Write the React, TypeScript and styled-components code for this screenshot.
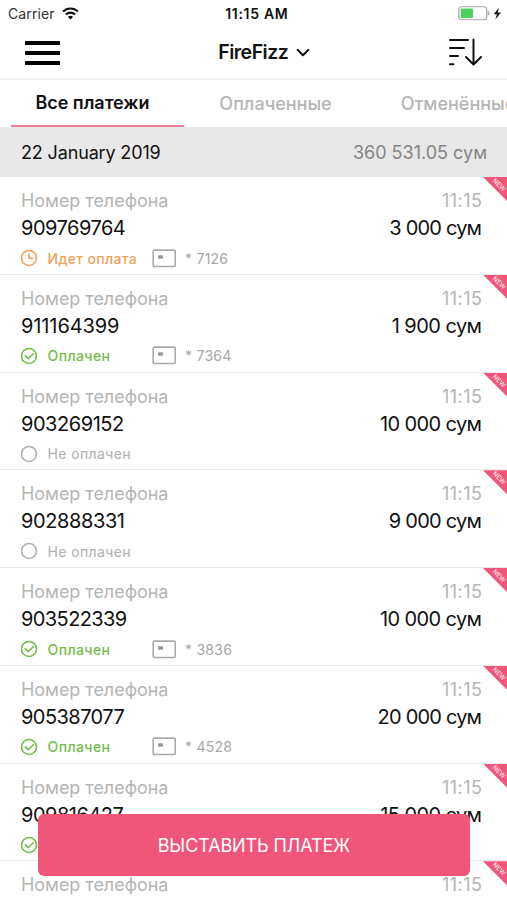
import React from 'react';
import styled, { createGlobalStyle } from 'styled-components';

const GlobalStyle = createGlobalStyle`
  * { box-sizing: border-box; }
  body { margin: 0; background: #fff; overflow: hidden; }
  button { font: inherit; border: 0; background: none; padding: 0; }
`;

const Screen = styled.div`
  position: relative;
  display: flex;
  flex-direction: column;
  height: 900px;
  overflow: hidden;
  background: #fff;
  color: #111;
  font-family: Inter, Roboto, sans-serif;
  white-space: nowrap;
`;

const Text = styled.span<{ $tracking?: number }>`
  letter-spacing: ${(p) => p.$tracking ?? 0}px;
  margin-right: ${(p) => -(p.$tracking ?? 0)}px;
`;

const StatusBar = styled.div`
  display: grid;
  grid-template-columns: 1fr auto 1fr;
  align-items: center;
  flex: none;
  height: 27px;
  padding: 0 5px 0 8px;
  font-size: 14px;
`;

const Carrier = styled.div`
  display: flex;
  align-items: center;
  gap: 7px;
  color: #333;
`;

const Clock = styled(Text)`
  font-weight: 600;
  margin-left: 3px;
`;

const Power = styled.div`
  display: flex;
  justify-content: flex-end;
`;

const NavBar = styled.header`
  display: grid;
  grid-template-columns: 1fr auto 1fr;
  align-items: center;
  flex: none;
  height: 53px;
  padding: 0 25px;
  border-bottom: 2px solid #efefef;
`;

const IconButton = styled.button<{ $end?: boolean }>`
  display: flex;
  justify-self: ${(p) => (p.$end ? 'end' : 'start')};
`;

const Account = styled.button`
  display: flex;
  align-items: center;
  gap: 7px;
  margin-left: 21px;
  padding-bottom: 1px;
  color: #111;
  font-size: 19.5px;
  font-weight: 600;
`;

const Tabs = styled.nav`
  display: flex;
  flex: none;
  height: 47px;
  padding-left: 11px;
  gap: 5px;
`;

const Tab = styled.button<{ $active?: boolean }>`
  flex: none;
  width: 173px;
  height: 47px;
  font-size: 18px;
  line-height: ${(p) => (p.$active ? 45 : 47)}px;
  letter-spacing: ${(p) => (p.$active ? -0.05 : 0)}px;
  font-weight: ${(p) => (p.$active ? 600 : 500)};
  color: ${(p) => (p.$active ? '#111' : '#b5b5b5')};
  border-bottom: ${(p) => (p.$active ? '2px solid #ee7f9b' : '0')};
  padding-right: ${(p) => (p.$active ? 10 : 0)}px;

  &:last-child {
    width: 182px;
  }
`;

const DateBar = styled.div`
  display: flex;
  justify-content: space-between;
  align-items: center;
  flex: none;
  height: 50px;
  padding: 1px 20px 0 21px;
  background: #e8e8e8;
  font-size: 18px;
`;

const Total = styled(Text)`
  color: #858585;
`;

const List = styled.div`
  flex: none;
`;

const Row = styled.article`
  position: relative;
  height: 97.75px;
  padding: 11px 25px 0 21px;
  border-bottom: 1.5px solid #ebebeb;
`;

const Line = styled.div<{ $muted?: boolean }>`
  display: flex;
  justify-content: space-between;
  align-items: center;
  height: ${(p) => (p.$muted ? 25 : 30)}px;
  font-size: ${(p) => (p.$muted ? 18 : 20)}px;
  color: ${(p) => (p.$muted ? '#b5b5b5' : '#111')};
`;

const StatusLine = styled.div`
  display: flex;
  align-items: center;
  height: 30px;
  font-size: 14px;
`;

const State = styled.div<{ $color: string; $bold: boolean }>`
  display: flex;
  align-items: center;
  gap: 9.5px;
  width: 131px;
  color: ${(p) => p.$color};
  font-weight: ${(p) => (p.$bold ? 450 : 400)};
`;

const Card = styled.div`
  display: flex;
  align-items: center;
  gap: 8px;
  color: #a8a8a8;
`;

const Ribbon = styled.div`
  position: absolute;
  top: 0;
  right: 0;
  width: 24px;
  height: 24px;
  background: #f0557a;
  clip-path: polygon(0 0, 100% 0, 100% 100%);
`;

const RibbonText = styled.span`
  position: absolute;
  top: 4px;
  left: 5px;
  width: 22px;
  height: 8px;
  color: #fff;
  font-size: 6.5px;
  line-height: 8px;
  text-align: center;
  transform: rotate(45deg);
`;

const PayButton = styled.button`
  position: absolute;
  left: 38px;
  right: 37px;
  top: 814px;
  height: 62px;
  border-radius: 6px;
  background: #f0557a;
  color: #fff;
  font-size: 18px;
  letter-spacing: -0.12px;
`;

type Status = 'pending' | 'paid' | 'unpaid';

interface Payment {
  phone: string;
  phoneTracking: number;
  amount: string;
  amountTracking: number;
  status: Status;
  card?: string;
}

const STATES: Record<Status, { label: string; color: string; tracking: number }> = {
  pending: { label: 'Идет оплата', color: '#eda35c', tracking: 0.35 },
  paid: { label: 'Оплачен', color: '#74bd4a', tracking: 0.4 },
  unpaid: { label: 'Не оплачен', color: '#b0b0b0', tracking: 0.38 },
};

const PAYMENTS: Payment[] = [
  { phone: '909769764', phoneTracking: -0.5, amount: '3 000 сум', amountTracking: -0.8, status: 'pending', card: '7126' },
  { phone: '911164399', phoneTracking: -0.1, amount: '1 900 сум', amountTracking: -0.55, status: 'paid', card: '7364' },
  { phone: '903269152', phoneTracking: -0.45, amount: '10 000 сум', amountTracking: -0.6, status: 'unpaid' },
  { phone: '902888331', phoneTracking: -0.4, amount: '9 000 сум', amountTracking: -0.75, status: 'unpaid' },
  { phone: '903522339', phoneTracking: -0.6, amount: '10 000 сум', amountTracking: -0.6, status: 'paid', card: '3836' },
  { phone: '905387077', phoneTracking: -0.55, amount: '20 000 сум', amountTracking: -0.8, status: 'paid', card: '4528' },
  { phone: '909816427', phoneTracking: -0.5, amount: '15 000 сум', amountTracking: -0.6, status: 'paid', card: '4528' },
  { phone: '909816427', phoneTracking: -0.5, amount: '15 000 сум', amountTracking: -0.6, status: 'paid', card: '4528' },
];

const WifiIcon = () => (
  <svg width="17" height="13" viewBox="0 0 17 13" fill="none" stroke="#111" strokeWidth="2.1">
    <path d="M1 4.6a10.7 10.7 0 0 1 15 0" />
    <path d="M3.8 7.6a6.7 6.7 0 0 1 9.4 0" />
    <path d="M8.5 12.6 5.9 10a3.7 3.7 0 0 1 5.2 0Z" fill="#111" stroke="none" />
  </svg>
);

const BatteryIcon = () => (
  <svg width="44" height="15" viewBox="0 0 44 15">
    <rect x="0.75" y="0.75" width="28" height="13" rx="3" fill="#fff" stroke="#a8a8a8" strokeWidth="1.2" />
    <rect x="2.7" y="2.6" width="12.3" height="9.3" rx="1" fill="#4cd15f" />
    <path d="M30.2 5.2q1.8 2 0 4Z" fill="#a8a8a8" stroke="#a8a8a8" />
    <path d="M41 1.6 35.7 8.3h3.2l-1.5 5.1 5.6-7h-3.4Z" fill="#111" />
  </svg>
);

const MenuIcon = () => (
  <svg width="35" height="24" viewBox="0 0 35 24" fill="#000">
    <rect y="0" width="35" height="4" rx="0.5" />
    <rect y="10" width="35" height="4" rx="0.5" />
    <rect y="20" width="35" height="4" rx="0.5" />
  </svg>
);

const SortIcon = () => (
  <svg width="34" height="29" viewBox="0 0 34 29" fill="none" stroke="#111" strokeWidth="2" strokeLinecap="round" strokeLinejoin="round">
    <path d="M2 2h18M2 10h14M2 18h8M2 26.3h3.5M25.5 1.5v25M18 19l7.5 7.5L33 19" />
  </svg>
);

const ChevronIcon = () => (
  <svg width="14" height="9" viewBox="0 0 14 9" fill="none" stroke="#111" strokeWidth="1.9" strokeLinecap="round" strokeLinejoin="round">
    <path d="M1.5 1.8 7 7.2l5.5-5.4" />
  </svg>
);

const StateIcon = ({ status }: { status: Status }) => (
  <svg width="17" height="18" viewBox="0 0 17 18" fill="none" stroke="currentColor" strokeWidth="1.6">
    <circle cx="8" cy="9" r="7.5" />
    {status === 'paid' && <path d="m3.8 8.4 3.5 3.3 5.4-5.4" />}
    {status === 'pending' && <path d="M8 4.5v4.8h4.2" />}
  </svg>
);

const CardIcon = () => (
  <svg width="25" height="19" viewBox="0 0 25 19">
    <rect x="1.2" y="1.1" width="22" height="16.4" rx="1.2" fill="none" stroke="#aaa" strokeWidth="1.6" />
    <rect x="6" y="6.3" width="5" height="3.4" rx="0.6" fill="#999" />
  </svg>
);

const PaymentRow = ({ payment }: { payment: Payment }) => {
  const state = STATES[payment.status];
  return (
    <Row>
      <Line $muted>
        <Text $tracking={-0.04}>Номер телефона</Text>
        <Text $tracking={0.5}>11:15</Text>
      </Line>
      <Line>
        <Text $tracking={payment.phoneTracking}>{payment.phone}</Text>
        <Text $tracking={payment.amountTracking}>{payment.amount}</Text>
      </Line>
      <StatusLine>
        <State $color={state.color} $bold={payment.status !== 'unpaid'}>
          <StateIcon status={payment.status} />
          <Text $tracking={state.tracking}>{state.label}</Text>
        </State>
        {payment.card && (
          <Card>
            <CardIcon />
            <Text $tracking={0.25}>* {payment.card}</Text>
          </Card>
        )}
      </StatusLine>
      <Ribbon>
        <RibbonText>NEW</RibbonText>
      </Ribbon>
    </Row>
  );
};

export default function App() {
  return (
    <Screen>
      <GlobalStyle />
      <StatusBar>
        <Carrier>
          <Text $tracking={0.1}>Carrier</Text>
          <WifiIcon />
        </Carrier>
        <Clock $tracking={0.7}>11:15 AM</Clock>
        <Power>
          <BatteryIcon />
        </Power>
      </StatusBar>
      <NavBar>
        <IconButton aria-label="Menu">
          <MenuIcon />
        </IconButton>
        <Account>
          <Text $tracking={-0.5}>FireFizz</Text>
          <ChevronIcon />
        </Account>
        <IconButton $end aria-label="Sort">
          <SortIcon />
        </IconButton>
      </NavBar>
      <Tabs>
        <Tab $active>Все платежи</Tab>
        <Tab>Оплаченные</Tab>
        <Tab>Отменённые</Tab>
      </Tabs>
      <DateBar>
        <Text $tracking={-0.15}>22 January 2019</Text>
        <Total>360 531.05 сум</Total>
      </DateBar>
      <List>
        {PAYMENTS.map((payment, index) => (
          <PaymentRow key={index} payment={payment} />
        ))}
      </List>
      <PayButton>ВЫСТАВИТЬ ПЛАТЕЖ</PayButton>
    </Screen>
  );
}
